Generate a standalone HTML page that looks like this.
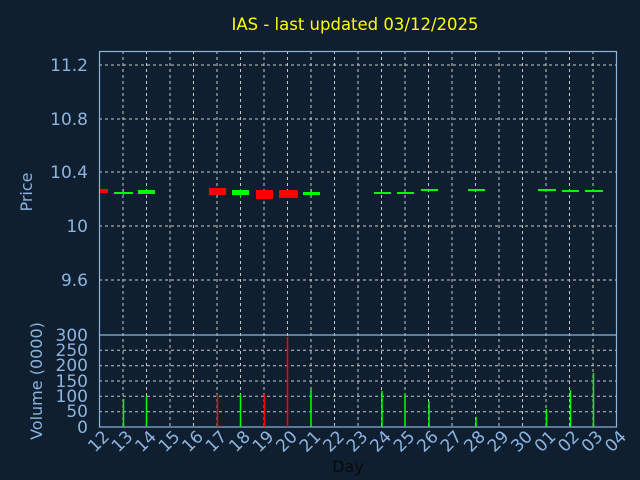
<!DOCTYPE html><html><head><style>body{margin:0;background:#0f1f2f}svg{display:block}</style></head><body>
<svg width="640" height="480" xmlns="http://www.w3.org/2000/svg" font-family="DejaVu Sans, sans-serif">
<rect width="640" height="480" fill="#0f1f2f"/>
<text x="355" y="30" fill="#ffff00" font-size="16.5" text-anchor="middle">IAS - last updated 03/12/2025</text>
<g stroke="#c8c8c8" stroke-dasharray="3,3" stroke-width="1">
<path d="M99 65H617M99 119H617M99 172H617M99 226H617M99 280H617"/>
<path d="M99 350.3H617M99 365.7H617M99 381H617M99 396.3H617M99 411.7H617"/>
<path d="M123 51V427M146.5 51V427M170 51V427M193.5 51V427M217 51V427M240.5 51V427M264 51V427M287.5 51V427M311 51V427M334.5 51V427M358 51V427M381.5 51V427M405 51V427M428.5 51V427M452 51V427M475.5 51V427M499 51V427M522.5 51V427M546 51V427M569.5 51V427M593 51V427"/>
</g>
<g fill="none" stroke="#8cb4e0" stroke-width="1.2">
<rect x="99.5" y="51.5" width="517" height="375.5"/>
<path d="M99 335H617"/>
</g>
<g fill="#8cb4e0" font-size="17" text-anchor="end">
<text x="88" y="71">11.2</text><text x="88" y="125">10.8</text><text x="88" y="178">10.4</text><text x="88" y="232">10</text><text x="88" y="286">9.6</text>
<text x="88" y="341">300</text><text x="88" y="356">250</text><text x="88" y="371">200</text><text x="88" y="387">150</text><text x="88" y="402">100</text><text x="88" y="417">50</text><text x="88" y="433">0</text>
</g>
<text transform="translate(32,192) rotate(-90)" fill="#8cb4e0" font-size="16" text-anchor="middle">Price</text>
<text transform="translate(42,381) rotate(-90)" fill="#8cb4e0" font-size="16" text-anchor="middle">Volume (0000)</text>
<text x="348" y="472" fill="#0a0a0a" font-size="16" text-anchor="middle">Day</text>
<g fill="#8cb4e0" font-size="17">
<text transform="translate(95,453) rotate(-45)">12</text><text transform="translate(118.5,453) rotate(-45)">13</text><text transform="translate(142,453) rotate(-45)">14</text><text transform="translate(165.5,453) rotate(-45)">15</text><text transform="translate(189,453) rotate(-45)">16</text><text transform="translate(212.5,453) rotate(-45)">17</text><text transform="translate(236,453) rotate(-45)">18</text><text transform="translate(259.5,453) rotate(-45)">19</text><text transform="translate(283,453) rotate(-45)">20</text><text transform="translate(306.5,453) rotate(-45)">21</text><text transform="translate(330,453) rotate(-45)">22</text><text transform="translate(353.5,453) rotate(-45)">23</text><text transform="translate(377,453) rotate(-45)">24</text><text transform="translate(400.5,453) rotate(-45)">25</text><text transform="translate(424,453) rotate(-45)">26</text><text transform="translate(447.5,453) rotate(-45)">27</text><text transform="translate(471,453) rotate(-45)">28</text><text transform="translate(494.5,453) rotate(-45)">29</text><text transform="translate(518,453) rotate(-45)">30</text><text transform="translate(541.5,453) rotate(-45)">01</text><text transform="translate(565,453) rotate(-45)">02</text><text transform="translate(588.5,453) rotate(-45)">03</text><text transform="translate(612,453) rotate(-45)">04</text>
</g>
<g fill="#ff0000">
<rect x="100" y="189" width="8" height="4"/><rect x="209" y="188" width="17" height="7"/><rect x="256" y="190" width="17" height="9"/><rect x="279" y="190" width="19" height="8"/>
</g>
<g fill="#00ff00">
<rect x="114" y="192" width="19" height="2"/><rect x="123" y="189" width="1" height="6"/>
<rect x="138" y="190" width="17" height="4"/>
<rect x="232" y="190" width="17" height="5"/><rect x="240" y="189" width="1" height="9"/>
<rect x="303" y="192" width="17" height="3"/><rect x="311" y="189" width="1" height="7"/>
<rect x="374" y="192" width="17" height="2"/><rect x="397" y="192" width="17" height="2"/><rect x="421" y="189" width="17" height="2"/><rect x="468" y="189" width="17" height="2"/><rect x="538" y="189" width="18" height="2"/><rect x="562" y="190" width="17" height="2"/><rect x="585" y="190" width="18" height="2"/>
</g>
<g stroke-width="1.5">
<path stroke="#00ff00" d="M123.5 427V399M146.5 427V396M240.5 427V394M311 427V389M382 427V391M405 427V393M429 427V401M476 427V417M546.5 427V409M570.5 427V390M593.5 427V373"/>
<path stroke="#ff0000" d="M217.5 427V394M264.5 427V394M287.5 427V337"/>
</g>
</svg></body></html>
